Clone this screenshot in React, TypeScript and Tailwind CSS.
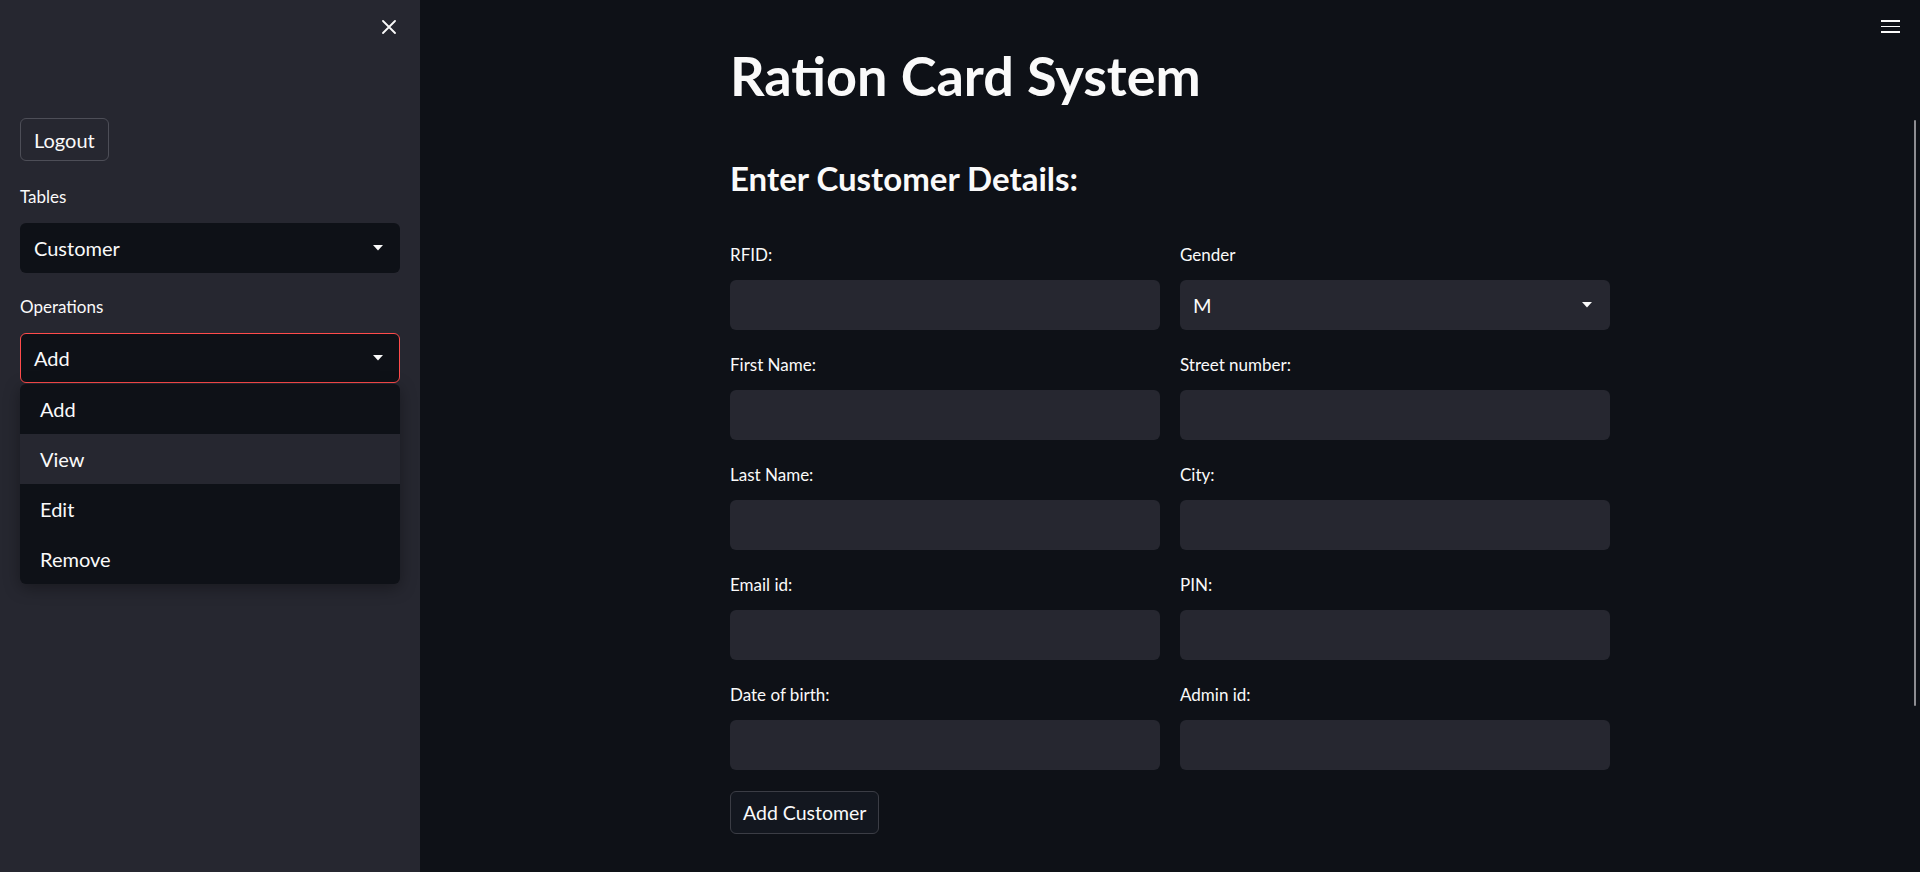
import React from "react";

const leftFields = ["RFID:", "First Name:", "Last Name:", "Email id:", "Date of birth:"];
const rightFields = ["Street number:", "City:", "PIN:", "Admin id:"];

function Caret() {
  return (
    <svg width="10" height="6" viewBox="0 0 10 6" className="shrink-0">
      <path d="M0 0 L10 0 L5 5.5 Z" fill="#fafafa" />
    </svg>
  );
}

function Field({ label }: { label: string }) {
  return (
    <div className="flex flex-col">
      <label className="h-[28px] text-[17px] leading-[28px] text-[#fafafa] mb-[11px]">{label}</label>
      <div className="h-[50px] rounded-[6px] bg-[#262730]" />
    </div>
  );
}

function Sidebar() {
  return (
    <aside className="w-[420px] shrink-0 min-h-screen bg-[#262730] px-5 relative">
      <div className="h-[54px] flex items-center justify-end pr-[4px]">
        <svg width="14" height="14" viewBox="0 0 14 14">
          <path d="M1 1 L13 13 M13 1 L1 13" stroke="#fafafa" strokeWidth="1.8" strokeLinecap="round" />
        </svg>
      </div>
      <button className="mt-[64px] h-[43px] px-[13px] rounded-[6px] border border-[#4d4e57] bg-[#262730] text-[20px] text-[#fafafa]">
        Logout
      </button>
      <div className="mt-[21.5px] h-[28px] text-[17px] leading-[28px] text-[#fafafa] mb-3">Tables</div>
      <div className="h-[50px] rounded-[6px] bg-[#0e1117] flex items-center justify-between pl-[14px] pr-[17px] text-[20px] text-[#fafafa]">
        <span>Customer</span>
        <Caret />
      </div>
      <div className="mt-[20px] h-[28px] text-[17px] leading-[28px] text-[#fafafa] mb-3">Operations</div>
      <div className="relative">
        <div className="h-[50px] rounded-[6px] bg-[#0e1117] border border-[#ff4b4b] flex items-center justify-between pl-[13px] pr-[16px] text-[20px] text-[#fafafa]">
          <span>Add</span>
          <Caret />
        </div>
        <ul className="absolute left-0 right-0 top-[51px] z-10 rounded-[6px] bg-[#0e1117] shadow-[0_4px_16px_rgba(0,0,0,0.35)] overflow-hidden text-[20px] text-[#fafafa]">
          {["Add", "View", "Edit", "Remove"].map((o) => (
            <li key={o} className={`h-[50px] flex items-center pl-[20px] ${o === "View" ? "bg-[#262730]" : ""}`}>
              {o}
            </li>
          ))}
        </ul>
      </div>
    </aside>
  );
}

export default function App() {
  return (
    <div className="flex w-full min-h-screen h-[872px] overflow-hidden bg-[#0e1117] font-['Source_Sans_Pro',Lato,sans-serif] text-[#fafafa]">
      <Sidebar />
      <main className="flex-1 relative">
        <div className="absolute right-[20px] top-[20px] flex flex-col gap-[4px]">
          <div className="w-[19px] h-[1.5px] bg-[#fafafa]" />
          <div className="w-[19px] h-[1.5px] bg-[#fafafa]" />
          <div className="w-[19px] h-[1.5px] bg-[#fafafa]" />
        </div>
        <div className="absolute right-[4px] top-[120px] w-[2px] h-[586px] rounded-full bg-[#8d8d92]" />
        <div className="w-[880px] mx-auto pt-[44px]">
          <h1 className="text-[54px] leading-[64px] font-bold">Ration Card System</h1>
          <h2 className="mt-[48px] text-[33px] leading-[44px] font-bold">Enter Customer Details:</h2>
          <div className="mt-[41px] grid grid-cols-2 gap-x-5">
            <div className="flex flex-col gap-[21px]">
              {leftFields.map((f) => (
                <Field key={f} label={f} />
              ))}
            </div>
            <div className="flex flex-col gap-[21px]">
              <div className="flex flex-col">
                <label className="h-[28px] text-[17px] leading-[28px] text-[#fafafa] mb-[11px]">Gender</label>
                <div className="h-[50px] rounded-[6px] bg-[#262730] flex items-center justify-between pl-[13px] pr-[18px] text-[20px]">
                  <span>M</span>
                  <Caret />
                </div>
              </div>
              {rightFields.map((f) => (
                <Field key={f} label={f} />
              ))}
            </div>
          </div>
          <button className="mt-[21px] h-[43px] px-[12px] rounded-[6px] border border-[#3b3d45] bg-[#13171f] text-[19.5px] text-[#fafafa]">
            Add Customer
          </button>
        </div>
      </main>
    </div>
  );
}
